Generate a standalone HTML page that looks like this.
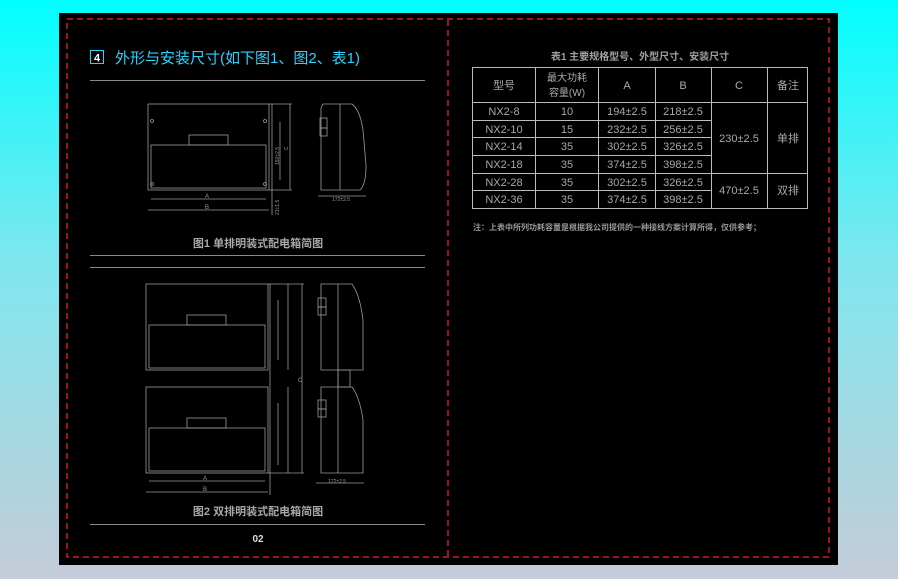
<!DOCTYPE html>
<html><head><meta charset="utf-8"><style>
html,body{margin:0;padding:0;width:898px;height:579px;overflow:hidden;background:linear-gradient(180deg,#00ffff 0%,#7fe6ee 45%,#c4ccd8 100%);}
svg{position:absolute;left:0;top:0}
text{font-family:"Liberation Sans","Noto Sans CJK SC",sans-serif;}
</style></head><body>
<svg width="898" height="579" viewBox="0 0 898 579">
<rect x="59" y="13" width="779" height="552" fill="#000"/>
<g stroke="#ff1e3c" stroke-width="1.2" stroke-dasharray="6,4" fill="none">
<rect x="67" y="19" width="762" height="538"/>
<line x1="448" y1="20" x2="448" y2="557"/>
</g>
<!-- title -->
<rect x="90.5" y="50.5" width="13" height="13" fill="none" stroke="#2ad4ff"/>
<text x="97" y="61.5" font-size="11" fill="#fff" text-anchor="middle" font-weight="bold">4</text>
<text x="115" y="63" font-size="15" fill="#2ad4ff">外形与安装尺寸(如下图1、图2、表1)</text>
<g stroke="#8a8a8a" stroke-width="1">
<line x1="90" y1="80.5" x2="425" y2="80.5"/>
<line x1="90" y1="255.5" x2="425" y2="255.5"/>
<line x1="90" y1="267.5" x2="425" y2="267.5"/>
<line x1="90" y1="524.5" x2="425" y2="524.5"/>
</g>
<!-- fig 1 -->
<g stroke="#9a9a9a" stroke-width="0.8" fill="none">
<rect x="148" y="104" width="121" height="86"/>
<rect x="151" y="145" width="115" height="43"/>
<rect x="189" y="135" width="39" height="10"/>
<line x1="151" y1="199" x2="266" y2="199"/><line x1="148" y1="210" x2="269" y2="210"/>
<line x1="272" y1="104" x2="272" y2="215"/><line x1="290" y1="104" x2="290" y2="190"/>
<line x1="280" y1="122" x2="280" y2="180"/>
<line x1="269" y1="104" x2="292" y2="104"/><line x1="269" y1="190" x2="292" y2="190"/>
<circle cx="152" cy="121" r="1.5"/><circle cx="265" cy="121" r="1.5"/><circle cx="152" cy="184" r="1.5"/><circle cx="265" cy="184" r="1.5"/>
<path d="M323 104 L352 104 Q360 110 363 130 L366 165 Q366 185 360 190 L321 190 L321 108 Z"/>
<line x1="340" y1="104" x2="340" y2="190"/>
<rect x="320" y="118" width="7" height="10"/><rect x="320" y="128" width="7" height="8"/>
<line x1="318" y1="196" x2="366" y2="196"/>
</g>
<g fill="#9a9a9a" font-size="6">
<text x="205" y="198">A</text><text x="205" y="209">B</text>
<text x="332" y="201" font-size="5">172±2.5</text>
<text transform="translate(279,165) rotate(-90)" font-size="5">160±2.5</text>
<text transform="translate(288,150) rotate(-90)" font-size="5">C</text>
<text transform="translate(279,215) rotate(-90)" font-size="5">21±1.5</text>
</g>
<text x="258" y="247" font-size="11" fill="#a8a8a8" text-anchor="middle" font-weight="bold">图1 单排明装式配电箱简图</text>
<!-- fig 2 -->
<g stroke="#9a9a9a" stroke-width="0.8" fill="none">
<rect x="146" y="284" width="122" height="86"/>
<rect x="149" y="325" width="116" height="43"/>
<rect x="187" y="315" width="39" height="10"/>
<rect x="146" y="387" width="122" height="86"/>
<rect x="149" y="428" width="116" height="43"/>
<rect x="187" y="418" width="39" height="10"/>
<line x1="149" y1="481" x2="265" y2="481"/><line x1="146" y1="492" x2="268" y2="492"/>
<line x1="270" y1="284" x2="270" y2="495"/>
<line x1="278" y1="300" x2="278" y2="360"/><line x1="288" y1="284" x2="288" y2="370"/>
<line x1="278" y1="403" x2="278" y2="465"/><line x1="288" y1="387" x2="288" y2="473"/>
<line x1="302" y1="284" x2="302" y2="473"/>
<line x1="268" y1="284" x2="304" y2="284"/><line x1="268" y1="473" x2="304" y2="473"/>
<path d="M321 284 L352 284 Q360 295 363 320 L363 370 L321 370 Z"/>
<path d="M321 387 L352 387 Q360 398 363 420 L363 473 L321 473 Z"/>
<line x1="338" y1="284" x2="338" y2="473"/>
<rect x="338" y="370" width="12" height="17"/>
<rect x="318" y="298" width="8" height="9"/><rect x="318" y="307" width="8" height="8"/>
<rect x="318" y="400" width="8" height="9"/><rect x="318" y="409" width="8" height="8"/>
<line x1="316" y1="483" x2="364" y2="483"/>
</g>
<g fill="#9a9a9a">
<text x="203" y="480" font-size="6">A</text><text x="203" y="491" font-size="6">B</text>
<text x="328" y="483" font-size="5">172±2.5</text>
<text x="298" y="382" font-size="6">C</text>
</g>
<text x="258" y="515" font-size="11" fill="#a8a8a8" text-anchor="middle" font-weight="bold">图2 双排明装式配电箱简图</text>
<text x="258" y="542" font-size="10" fill="#ddd" text-anchor="middle" font-weight="bold">02</text>
<!-- table -->
<text x="640" y="60" font-size="10" fill="#a0a0a0" text-anchor="middle" font-weight="bold">表1 主要规格型号、外型尺寸、安装尺寸</text>
<g stroke="#bbb" stroke-width="1" fill="none">
<rect x="472.5" y="67.5" width="335" height="141"/>
<line x1="472" y1="102.5" x2="808" y2="102.5"/>
<line x1="472" y1="120.5" x2="711" y2="120.5"/>
<line x1="472" y1="137.5" x2="711" y2="137.5"/>
<line x1="472" y1="155.5" x2="711" y2="155.5"/>
<line x1="472" y1="173.5" x2="808" y2="173.5"/>
<line x1="472" y1="190.5" x2="711" y2="190.5"/>
<line x1="535.5" y1="67" x2="535.5" y2="208"/>
<line x1="598.5" y1="67" x2="598.5" y2="208"/>
<line x1="655.5" y1="67" x2="655.5" y2="208"/>
<line x1="711.5" y1="67" x2="711.5" y2="208"/>
<line x1="767.5" y1="67" x2="767.5" y2="208"/>
</g>
<g fill="#a8a8a8" font-size="11" text-anchor="middle">
<text x="504" y="89">型号</text>
<text x="567" y="81" font-size="10">最大功耗</text><text x="567" y="96" font-size="10">容量(W)</text>
<text x="627" y="89">A</text><text x="683" y="89">B</text><text x="739" y="89">C</text><text x="788" y="89">备注</text>
<text x="504" y="115">NX2-8</text><text x="567" y="115">10</text><text x="627" y="115">194±2.5</text><text x="683" y="115">218±2.5</text>
<text x="504" y="133">NX2-10</text><text x="567" y="133">15</text><text x="627" y="133">232±2.5</text><text x="683" y="133">256±2.5</text>
<text x="504" y="150">NX2-14</text><text x="567" y="150">35</text><text x="627" y="150">302±2.5</text><text x="683" y="150">326±2.5</text>
<text x="504" y="168">NX2-18</text><text x="567" y="168">35</text><text x="627" y="168">374±2.5</text><text x="683" y="168">398±2.5</text>
<text x="504" y="186">NX2-28</text><text x="567" y="186">35</text><text x="627" y="186">302±2.5</text><text x="683" y="186">326±2.5</text>
<text x="504" y="203">NX2-36</text><text x="567" y="203">35</text><text x="627" y="203">374±2.5</text><text x="683" y="203">398±2.5</text>
<text x="739" y="142">230±2.5</text><text x="788" y="142">单排</text>
<text x="739" y="194">470±2.5</text><text x="788" y="194">双排</text>
</g>
<text x="473" y="230" font-size="8" fill="#999" font-weight="bold">注：上表中所列功耗容量是根据我公司提供的一种接线方案计算所得，仅供参考；</text>
</svg>
</body></html>
